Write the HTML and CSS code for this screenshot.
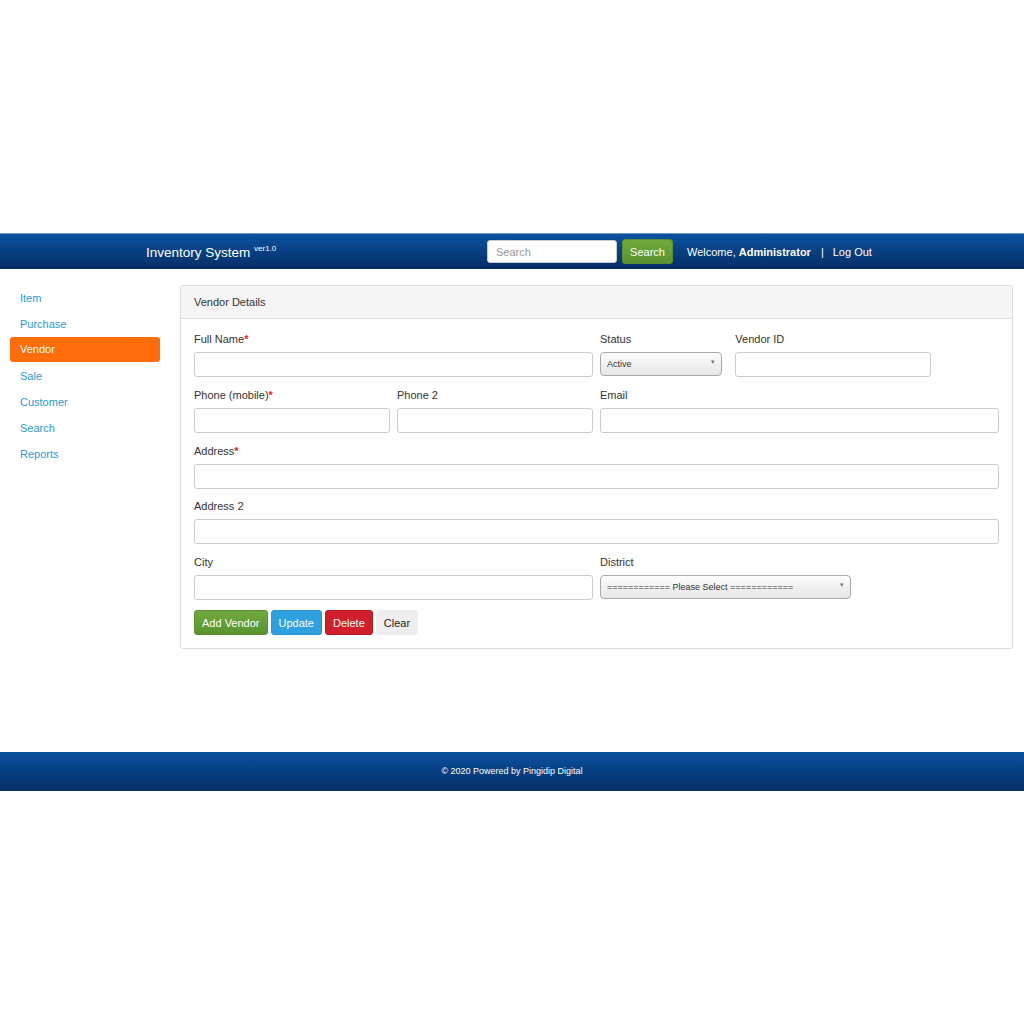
FILE: index.html
```html
<!DOCTYPE html>
<html>
<head>
<meta charset="utf-8">
<link rel="stylesheet" href="styles.css">
</head>
<body>
<div class="top-space"></div>
<header class="navbar">
  <div class="brand">Inventory System <sup>ver1.0</sup></div>
  <div class="nav-right">
    <input class="nav-search" type="text" placeholder="Search">
    <button class="btn btn-green nav-btn">Search</button>
    <span class="welcome">Welcome, <b>Administrator</b></span>
    <span class="sep">|</span>
    <span class="logout">Log Out</span>
  </div>
</header>
<div class="main">
  <nav class="sidebar">
    <a class="side-item">Item</a>
    <a class="side-item">Purchase</a>
    <a class="side-item active">Vendor</a>
    <a class="side-item">Sale</a>
    <a class="side-item">Customer</a>
    <a class="side-item">Search</a>
    <a class="side-item">Reports</a>
  </nav>
  <section class="panel">
    <div class="panel-heading">Vendor Details</div>
    <div class="panel-body">
      <div class="grid">
        <div class="field s6"><label>Full Name<span class="req">*</span></label><input type="text"></div>
        <div class="field s2"><label>Status</label><div class="select w-status"><span>Active</span><span class="caret">▾</span></div></div>
        <div class="field s3"><label>Vendor ID</label><input type="text"></div>
        <div class="field s1"></div>

        <div class="field s3"><label>Phone (mobile)<span class="req">*</span></label><input type="text"></div>
        <div class="field s3"><label>Phone 2</label><input type="text"></div>
        <div class="field s6"><label>Email</label><input type="text"></div>

        <div class="field s12"><label>Address<span class="req">*</span></label><input type="text"></div>
        <div class="field s12"><label>Address 2</label><input type="text"></div>

        <div class="field s6"><label>City</label><input type="text"></div>
        <div class="field s6"><label>District</label><div class="select w-district"><span>============ Please Select ============</span><span class="caret">▾</span></div></div>
      </div>
      <div class="actions">
        <button class="btn btn-green">Add Vendor</button>
        <button class="btn btn-blue">Update</button>
        <button class="btn btn-red">Delete</button>
        <button class="btn btn-grey">Clear</button>
      </div>
    </div>
  </section>
</div>
<footer class="footer">© 2020 Powered by Pingidip Digital</footer>
</body>
</html>
```
FILE: styles.css
```css
* { box-sizing: border-box; }
html, body { margin: 0; padding: 0; background: #fff; }
body {
  font-family: "Liberation Sans", Arial, Helvetica, sans-serif;
  font-size: 11px;
  color: #333;
  width: 1024px;
}
.top-space { height: 233px; }

.navbar {
  height: 36px;
  background: linear-gradient(to bottom, #0b53a0 0%, #083f82 50%, #052e66 100%);
  border-top: 1px solid #6f93c3;
  display: flex;
  align-items: center;
  padding-left: 146px;
  color: #fff;
}
.brand {
  font-size: 13.5px;
  width: 341px;
}
.brand sup { font-size: 8px; vertical-align: 6px; }
.nav-right { display: flex; align-items: center; }
.nav-search {
  width: 130px;
  height: 23px;
  border: 1px solid #ccc;
  border-radius: 3px;
  padding: 0 8px;
  font-family: inherit;
  font-size: 11px;
  color: #555;
}
.nav-search::placeholder { color: #999; }
.nav-btn { margin-left: 5px; height: 24px; width: 51px; padding: 0; }
.welcome { margin-left: 14px; font-size: 11px; }
.welcome b { font-weight: bold; }
.sep { margin-left: 10px; }
.logout { margin-left: 9px; }

.main {
  display: flex;
  align-items: flex-start;
  padding: 16px 11px 0 10px;
  height: 483px;
}
.sidebar {
  width: 151px;
  margin-right: 20px;
  display: flex;
  flex-direction: column;
}
.side-item {
  display: block;
  height: 26px;
  line-height: 26px;
  padding-left: 10px;
  color: #2a9ad6;
  border-radius: 3px;
  font-size: 11px;
}
.side-item.active {
  background: #ff6c0c;
  color: #fff;
  height: 25px;
  line-height: 25px;
  margin: 0 0 1px;
}

.panel {
  flex: 1;
  border: 1px solid #dddddd;
  border-radius: 3px;
  background: #fff;
  height: 364px;
}
.panel-heading {
  height: 33px;
  background: #f5f5f5;
  border-bottom: 1px solid #ddd;
  padding: 0 13px;
  line-height: 32px;
  color: #333;
  border-radius: 3px 3px 0 0;
}
.panel-body { padding: 14px 13px 0 13px; }
.grid {
  display: grid;
  grid-template-columns: repeat(12, 1fr);
  column-gap: 7px;
  row-gap: 11.75px;
  width: 805px;
}
.s1 { grid-column: span 1; }
.s2 { grid-column: span 2; }
.s3 { grid-column: span 3; }
.s6 { grid-column: span 6; }
.s12 { grid-column: span 12; }
.field label {
  display: block;
  height: 13px;
  line-height: 13px;
  margin-bottom: 6px;
  color: #333;
}
.req { color: #e0232b; font-weight: bold; }
.field input {
  display: block;
  width: 100%;
  height: 25px;
  border: 1px solid #ccc;
  border-radius: 3px;
  font-family: inherit;
  font-size: 11px;
  padding: 0 8px;
}
.select {
  display: flex;
  align-items: center;
  justify-content: space-between;
  height: 24px;
  border: 1px solid #a9a9a9;
  border-radius: 4px;
  background: linear-gradient(to bottom, #fdfdfd, #e6e6e6);
  font-size: 9px;
  padding: 0 6px;
  color: #333;
}
.select .caret { font-size: 7px; color: #777; margin-top: -4px; }
.w-status { width: 122px; }
.w-district { width: 251px; }

.actions { display: flex; gap: 3px; margin-top: 10px; }
.btn {
  height: 25px;
  border: 1px solid transparent;
  border-radius: 3px;
  font-family: inherit;
  font-size: 11px;
  padding: 0 7px;
  color: #fff;
  cursor: pointer;
}
.btn-green { background: linear-gradient(to bottom, #70aa3f, #5a932e); border-color: #5a8e2e; color: #fff; }
.btn-blue { background: #2ea0e0; border-color: #2a95d2; }
.btn-red { background: #d01e2a; border-color: #b81a24; }
.btn-grey { background: #eeeeee; color: #222; border-color: #eee; }

.footer {
  height: 39px;
  background: linear-gradient(to bottom, #0b53a0 0%, #083f82 50%, #052e66 100%);
  color: #fff;
  font-size: 9px;
  text-align: center;
  line-height: 39px;
}
```
